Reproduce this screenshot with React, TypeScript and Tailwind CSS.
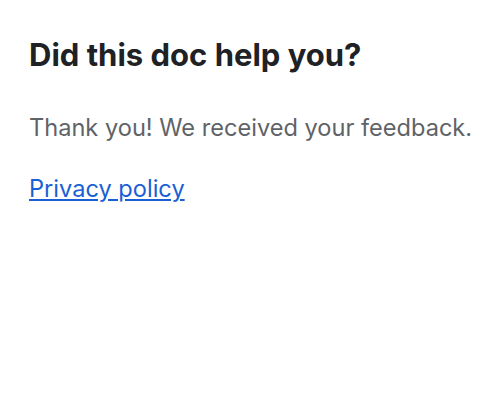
import React from 'react';

export default function App() {
  return (
    <div className="min-h-screen bg-white px-[29px] pt-[36px] font-['Inter',sans-serif]">
      <h2 className="text-[31px] font-bold leading-[38px] text-[#202124]">Did this doc help you?</h2>
      <p className="mt-[40px] text-[23.6px] leading-[28px] text-[#5f6368]">Thank you! We received your feedback.</p>
      <a href="#" className="mt-[33px] inline-block text-[23.6px] leading-[28px] text-[#1a5fd6] underline">
        Privacy policy
      </a>
    </div>
  );
}
